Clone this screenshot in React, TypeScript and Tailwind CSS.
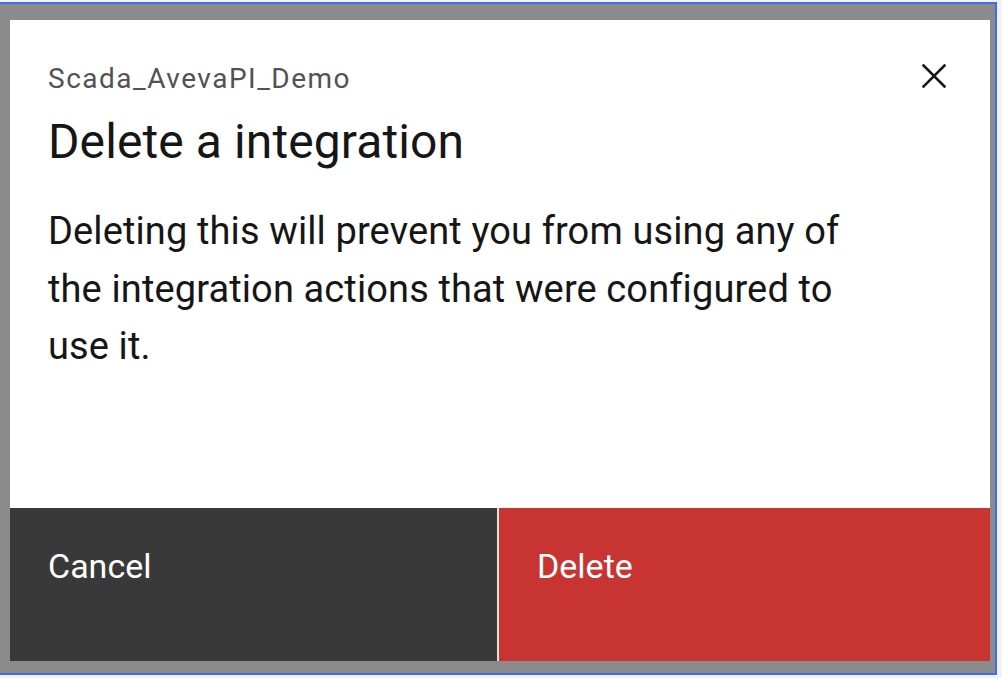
import React from "react";

export default function App() {
  const font = { fontFamily: "Roboto, 'Noto Sans', Arial, sans-serif" };
  return (
    <div className="w-[1002px] h-[678px] bg-[#f2f2f2] pt-[2px] overflow-hidden" style={font}>
      <div className="w-[997px] h-[673px] border-t-2 border-r-2 border-b-2 border-[#3d6cf0] bg-[#8b8b8b] pt-[16px] pl-[10px] pr-[5px]">
        <div className="w-[980px] h-[641px] bg-white flex flex-col">
          <div className="relative flex-1 px-[38px] pt-[40px]">
            <p className="text-[28px] leading-[38px] tracking-[1.5px] text-[#525252]">Scada_AvevaPI_Demo</p>
            <h2 className="mt-[10px] text-[48px] leading-[67px] tracking-[0.1px] text-[#161616]">Delete a integration</h2>
            <p className="mt-[28px] w-[850px] text-[38px] leading-[57.6px] tracking-[0.12px] text-[#161616]">
              Deleting this will prevent you from using any of the integration actions that were configured to use it.
            </p>
            <button className="absolute right-[38px] top-[38px] w-[36px] h-[36px] flex items-center justify-center" aria-label="Close">
              <svg width="24" height="24" viewBox="0 0 24 24" fill="none" stroke="#161616" strokeWidth="2.6" strokeLinecap="square">
                <path d="M1.5 1.5 L22.5 22.5 M22.5 1.5 L1.5 22.5" />
              </svg>
            </button>
          </div>
          <div className="h-[153px] flex gap-[2px] bg-[#e0e0e0]">
            <div className="w-[487px] bg-[#393939] text-white text-[34px] pl-[38px] pt-[34px] leading-[48px]">Cancel</div>
            <div className="flex-1 bg-[#c73431] text-white text-[34px] pl-[38px] pt-[34px] leading-[48px]">Delete</div>
          </div>
        </div>
      </div>
    </div>
  );
}
